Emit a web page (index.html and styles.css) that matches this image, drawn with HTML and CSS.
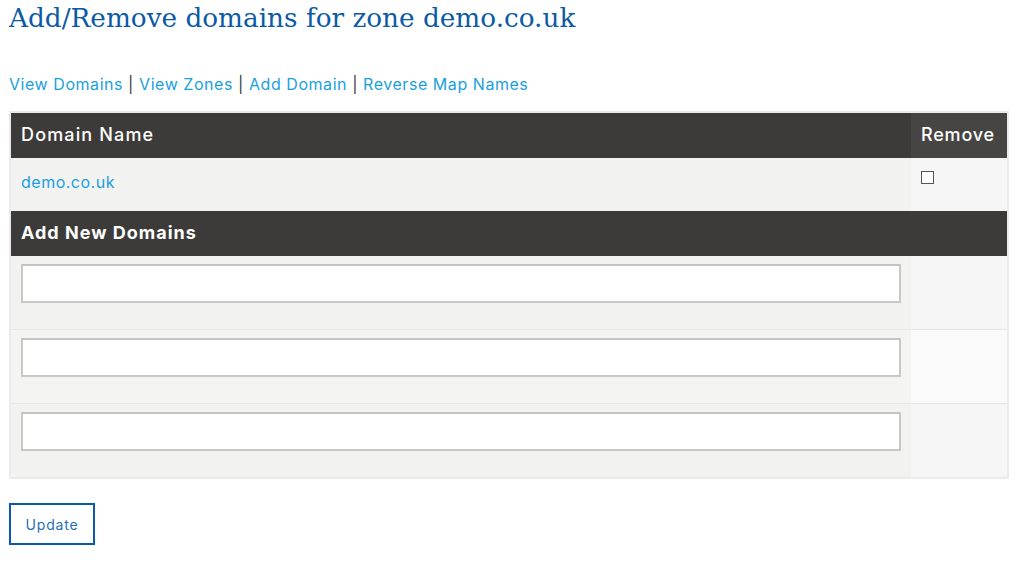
FILE: index.html
```html
<!DOCTYPE html>
<html>
<head>
<meta charset="utf-8">
<link rel="stylesheet" href="styles.css">
</head>
<body>
<div class="page">
  <h1 class="title">Add/Remove domains for zone demo.co.uk</h1>
  <p class="nav">
    <a href="#">View Domains</a> | <a href="#">View Zones</a> | <a href="#">Add Domain</a> | <a href="#">Reverse Map Names</a>
  </p>
  <form>
    <div class="grid">
      <div class="row head">
        <div class="c-name wide">Domain Name</div>
        <div class="c-rm">Remove</div>
      </div>
      <div class="row odd list-row">
        <div class="c-name"><a href="#">demo.co.uk</a></div>
        <div class="c-rm"><span class="check"></span></div>
      </div>
      <div class="row head bold">
        <div class="c-name">Add New Domains</div>
        <div class="c-rm"></div>
      </div>
      <div class="row odd input-row">
        <div class="c-name"><input class="field" type="text"></div>
        <div class="c-rm"></div>
      </div>
      <div class="row even input-row">
        <div class="c-name"><input class="field" type="text"></div>
        <div class="c-rm"></div>
      </div>
      <div class="row odd input-row last">
        <div class="c-name"><input class="field" type="text"></div>
        <div class="c-rm"></div>
      </div>
    </div>
    <button class="btn" type="button">Update</button>
  </form>
</div>
</body>
</html>
```
FILE: styles.css
```css
html, body {
  margin: 0;
  padding: 0;
  background: #fff;
}
.page {
  padding: 0 9px;
  font-family: "Inter", "Open Sans", sans-serif;
}
.title {
  margin: 0;
  padding-top: 1px;
  font-family: "DejaVu Serif", serif;
  font-weight: normal;
  font-size: 26.3px;
  line-height: 34px;
  color: #0b5aa6;
}
.nav {
  margin: 38px 0 0 0;
  font-size: 16px;
  line-height: 22px;
  letter-spacing: 0.55px;
  color: #3a3a3a;
}
.nav a {
  color: #1a9fe0;
  text-decoration: none;
}
.grid {
  margin-top: 16px;
  width: 1000px;
  box-sizing: border-box;
  border: 2px solid #ebebeb;
}
.row {
  display: grid;
  grid-template-columns: 900px 96px;
}
.row > div {
  padding: 0 10px;
  box-sizing: border-box;
}
.head {
  height: 45px;
  color: #fff;
  font-size: 18px;
  font-weight: 500;
  letter-spacing: 0.8px;
}
.head > div {
  display: flex;
  align-items: center;
  padding-bottom: 3px;
  background: #3c3b3a;
}
.head > .wide {
  letter-spacing: 1.15px;
}
.head > .c-rm {
  background: #464544;
}
.head.bold {
  font-weight: 700;
  letter-spacing: 1px;
}
.head.bold > .c-rm {
  background: #3c3b3a;
}
.list-row {
  height: 53px;
}
.list-row > div {
  padding-top: 12px;
}
.odd > .c-name { background: #f2f2f1; }
.odd > .c-rm { background: #f6f6f6; }
.even > .c-name { background: #f4f4f3; }
.even > .c-rm { background: #fafafa; }
.row a {
  color: #1a9fe0;
  text-decoration: none;
  font-size: 16px;
  line-height: 24px;
  letter-spacing: 0.5px;
}
.check {
  display: block;
  width: 11px;
  height: 11px;
  border: 1px solid #555;
  background: #fff;
  margin-top: 1px;
}
.input-row {
  height: 74px;
  border-bottom: 1px solid #e6e6e6;
  box-sizing: border-box;
}
.input-row.last {
  height: 73px;
  border-bottom: 0;
}
.input-row > div {
  padding-top: 8px;
}
.field {
  display: block;
  width: 880px;
  height: 39px;
  box-sizing: border-box;
  border: 2px solid #c8c8c8;
  border-top-color: #c3c3c3;
  background: #fff;
  margin: 0;
}
.btn {
  margin-top: 24px;
  width: 86px;
  height: 42px;
  background: #fff;
  border: 2px solid #0b5aa6;
  color: #1f6fb7;
  font-family: "Inter", "Open Sans", sans-serif;
  font-size: 14px;
  letter-spacing: 0.8px;
  padding: 0;
}
```
